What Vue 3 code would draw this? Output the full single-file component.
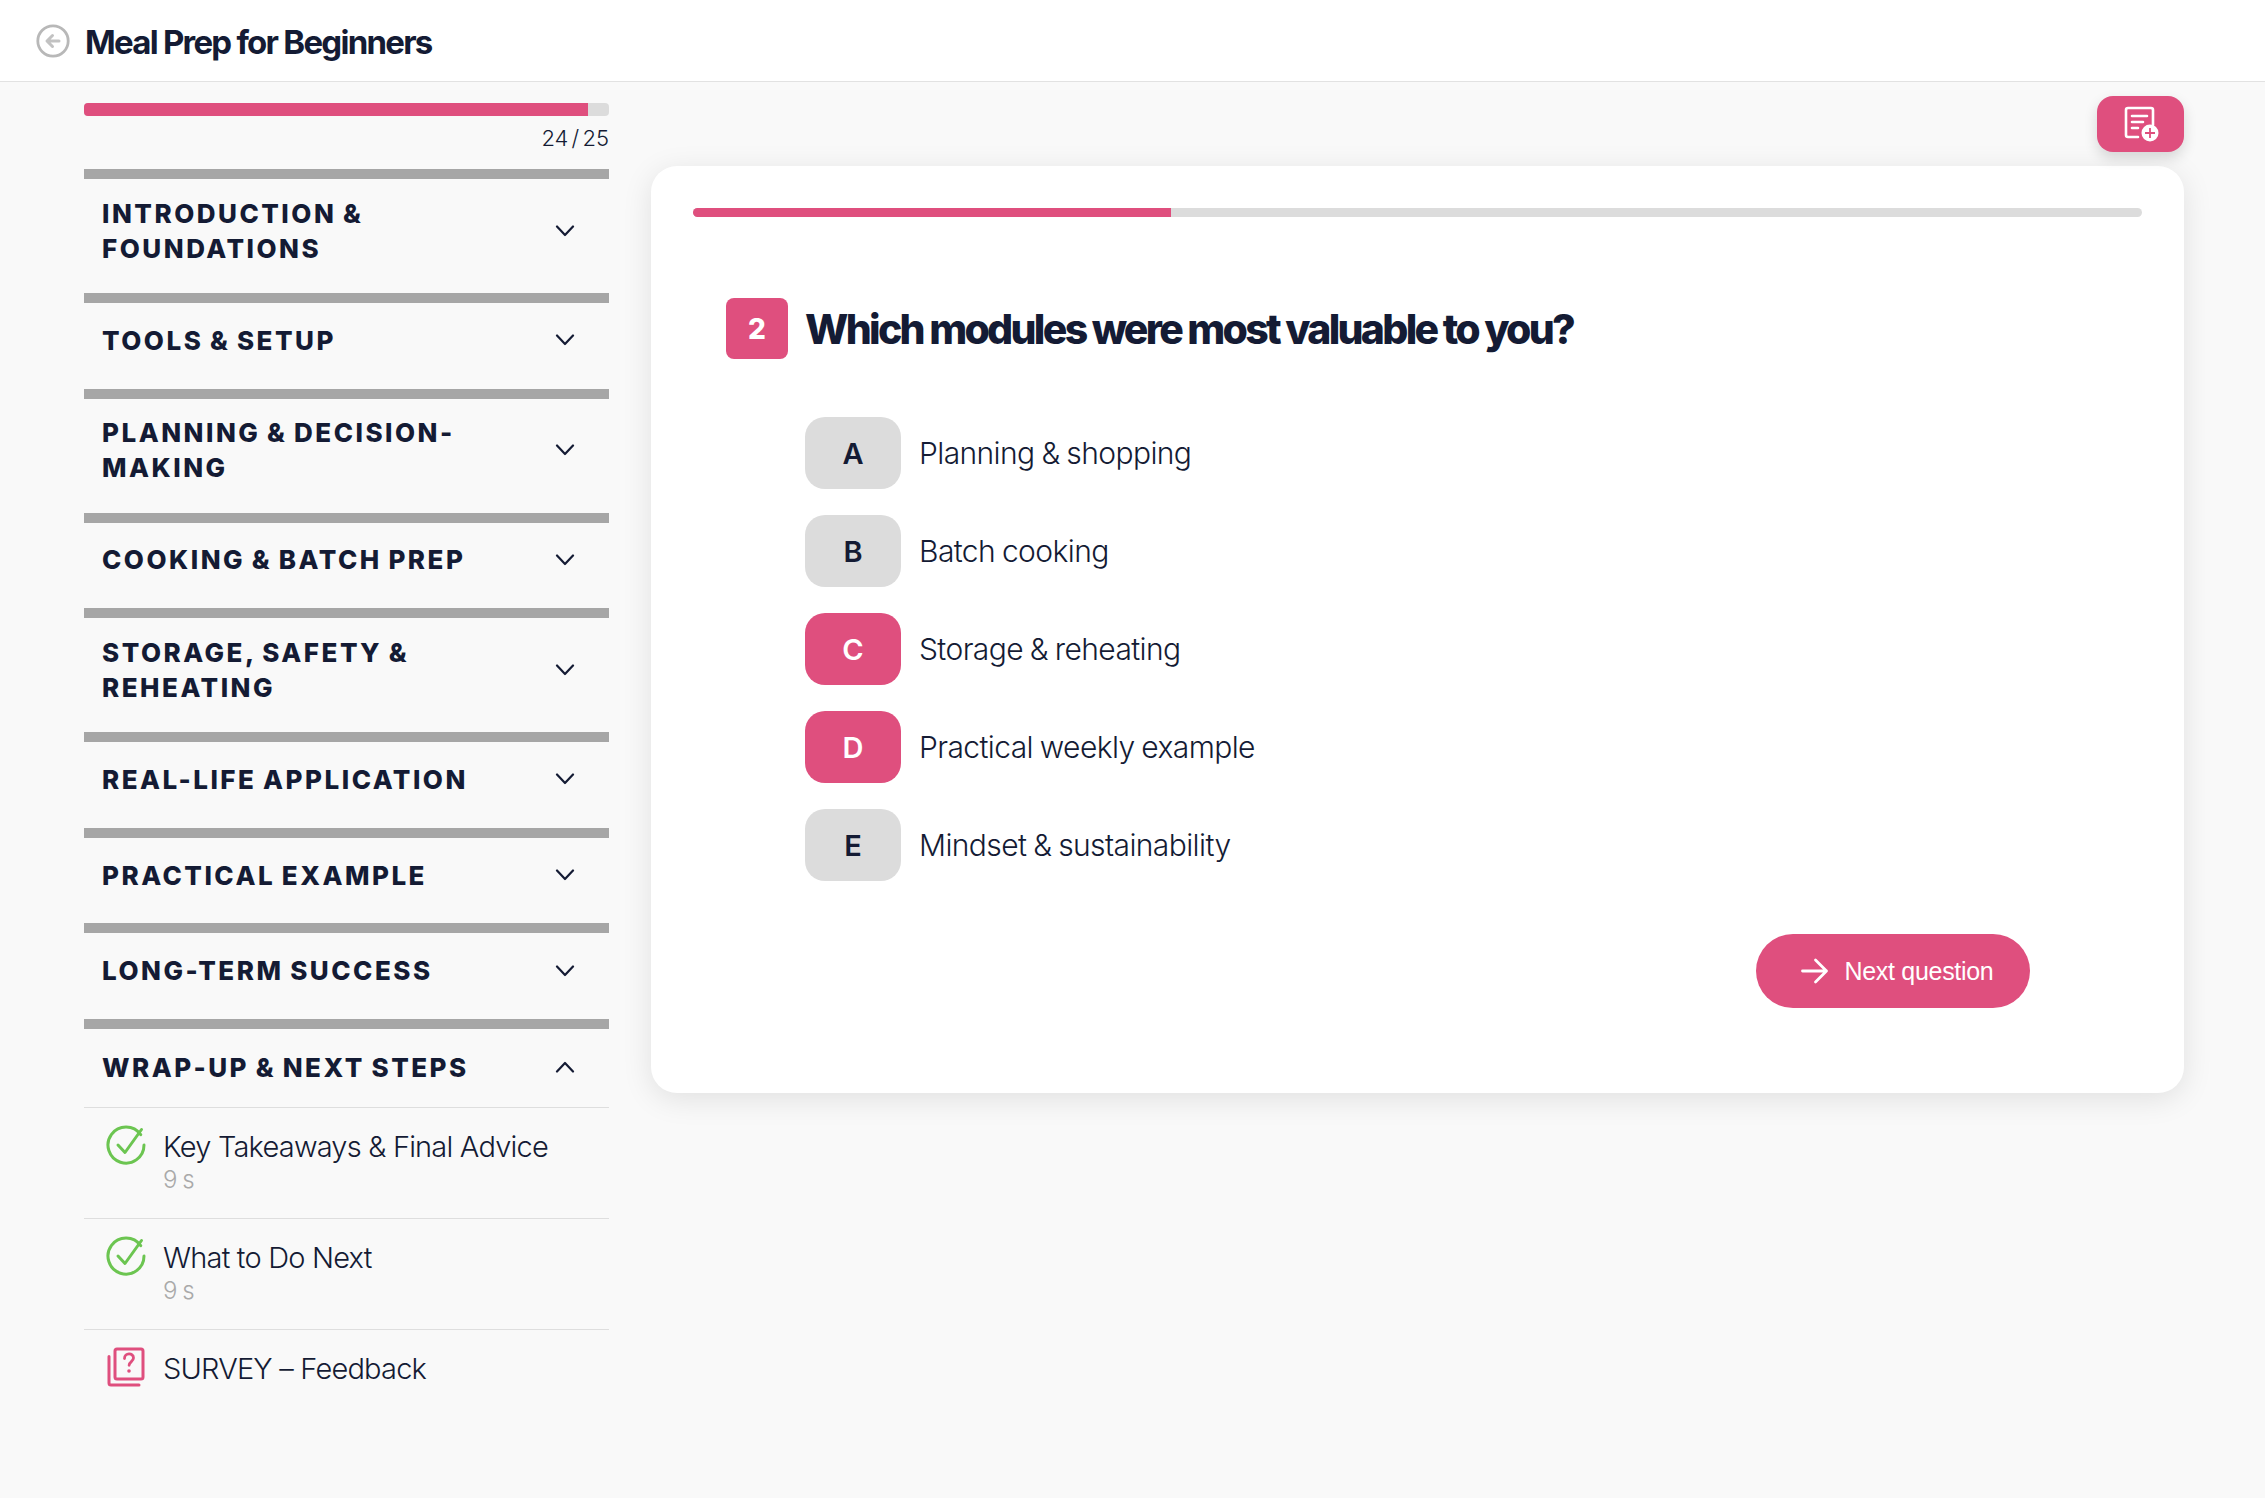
<template>
  <div class="page">
    <header class="topbar">
      <svg class="back" viewBox="0 0 34 34" fill="none">
        <circle cx="17" cy="17" r="15.2" stroke="#b8b8b8" stroke-width="2.8" />
        <path d="M23 17H11.5M16.5 11.5 11 17l5.5 5.5" stroke="#c2c2c2" stroke-width="3" stroke-linecap="round" stroke-linejoin="round" />
      </svg>
      <h1 class="course-title">Meal Prep for Beginners</h1>
    </header>

    <div class="layout">
      <aside class="sidebar">
        <div class="bar"><div class="bar-fill"></div></div>
        <div class="count">24 / 25</div>

        <section v-for="s in sections" :key="s.title" class="section">
          <div class="section-head" :class="{ open: s.open }">
            <span class="section-title">{{ s.title }}</span>
            <svg class="chevron" viewBox="0 0 20 12" fill="none">
              <path :d="s.open ? 'M2 10.5 10 2l8 8.5' : 'M2 1.5 10 10l8-8.5'" stroke="#141b34" stroke-width="2.2" stroke-linecap="round" stroke-linejoin="round" />
            </svg>
          </div>
          <template v-if="s.open">
            <div v-for="l in lessons" :key="l.name" class="lesson">
              <svg v-if="l.time" class="lesson-icon" viewBox="0 0 40 40" fill="none">
                <path d="M34.7 9.7A18 18 0 1 0 38 20" stroke="#6cc551" stroke-width="3" stroke-linecap="round" />
                <path d="M12 20l7 7.5L35.5 4.5" stroke="#6cc551" stroke-width="3" stroke-linecap="round" stroke-linejoin="round" />
              </svg>
              <svg v-else class="lesson-icon" viewBox="0 0 40 40" fill="none">
                <path d="M3 9.5V36a2 2 0 0 0 2 2h28" stroke="#df4f7e" stroke-width="3" stroke-linecap="round" />
                <rect x="9" y="2" width="28" height="30" rx="2" stroke="#df4f7e" stroke-width="3" />
                <path d="M18.5 11.5c0-6 9-6 9-.4 0 3.4-4.4 3.6-4.4 7.2" stroke="#df4f7e" stroke-width="2.8" stroke-linecap="round" />
                <circle cx="23" cy="24" r="1.8" fill="#df4f7e" />
              </svg>
              <div class="lesson-text">
                <div class="lesson-name">{{ l.name }}</div>
                <div v-if="l.time" class="lesson-time">{{ l.time }}</div>
              </div>
            </div>
          </template>
        </section>
      </aside>

      <main class="main">
        <div class="toolbar">
          <button class="notes-btn">
            <svg viewBox="0 0 36 36" width="36" height="36" fill="none">
              <path d="M15 31H5a2 2 0 0 1-2-2V4a2 2 0 0 1 2-2h23a2 2 0 0 1 2 2v15" stroke="#fff" stroke-width="2.6" stroke-linecap="round" />
              <path d="M9 10h15M9 16h11M9 22h6" stroke="#fff" stroke-width="2.6" stroke-linecap="round" />
              <circle cx="27" cy="27" r="8.5" fill="#fff" />
              <path d="M27 22v10M22 27h10" stroke="#df4f7e" stroke-width="1.8" />
            </svg>
          </button>
        </div>

        <div class="card">
          <div class="quiz-bar"><div class="quiz-fill"></div></div>

          <div class="question">
            <span class="q-num">2</span>
            <h2 class="q-text">Which modules were most valuable to you?</h2>
          </div>

          <div class="options">
            <div v-for="o in options" :key="o.key" class="option">
              <span class="opt-key" :class="{ picked: o.picked }">{{ o.key }}</span>
              <span class="opt-label">{{ o.label }}</span>
            </div>
          </div>

          <div class="actions">
            <button class="next-btn">
              <svg viewBox="0 0 28 26" width="28" height="26" fill="none">
                <path d="M1.5 13h24M14.5 2l11 11-11 11" stroke="#fff" stroke-width="2.8" stroke-linecap="round" stroke-linejoin="round" />
              </svg>
              Next question
            </button>
          </div>
        </div>
      </main>
    </div>
  </div>
</template>

<script setup>
const sections = [
  { title: "Introduction & Foundations" },
  { title: "Tools & Setup" },
  { title: "Planning & Decision-Making" },
  { title: "Cooking & Batch Prep" },
  { title: "Storage, Safety & Reheating" },
  { title: "Real-Life Application" },
  { title: "Practical Example" },
  { title: "Long-Term Success" },
  { title: "Wrap-Up & Next Steps", open: true },
];

const lessons = [
  { name: "Key Takeaways & Final Advice", time: "9 s" },
  { name: "What to Do Next", time: "9 s" },
  { name: "SURVEY – Feedback" },
];

const options = [
  { key: "A", label: "Planning & shopping" },
  { key: "B", label: "Batch cooking" },
  { key: "C", label: "Storage & reheating", picked: true },
  { key: "D", label: "Practical weekly example", picked: true },
  { key: "E", label: "Mindset & sustainability" },
];
</script>

<style>
html,
body {
  margin: 0;
  background: #f9f9f9;
}
</style>

<style scoped>
.page {
  min-height: 100vh;
  background: #f9f9f9;
  color: #141b34;
  font-family: Inter, "Liberation Sans", sans-serif;
}

.topbar {
  display: flex;
  align-items: center;
  gap: 15px;
  height: 81px;
  padding-left: 36px;
  background: #fff;
  border-bottom: 1px solid #e2e2e2;
}

.back {
  width: 34px;
  height: 34px;
}

.course-title {
  margin: 2px 0 0;
  font-size: 33px;
  font-weight: 700;
  letter-spacing: -1.75px;
}

.layout {
  display: flex;
  padding: 21px 81px 0 84px;
}

.sidebar {
  width: 525px;
  flex-shrink: 0;
}

.bar {
  height: 13px;
  border-radius: 4px;
  background: #dcdcdc;
  overflow: hidden;
}

.bar-fill {
  width: 96%;
  height: 100%;
  background: #df4f7e;
}

.count {
  margin-top: 8px;
  margin-bottom: 16px;
  height: 29px;
  line-height: 29px;
  text-align: right;
  font-size: 22px;
  font-weight: 300;
  word-spacing: -3px;
}

.section {
  border-top: 10px solid #a6a6a6;
}

.section-head {
  display: flex;
  align-items: center;
  justify-content: space-between;
  min-height: 85.6px;
  padding: 16.5px 34px 27.5px 18px;
  box-sizing: border-box;
}

.section-head.open {
  min-height: 78px;
  padding-top: 21px;
  padding-bottom: 22px;
}

.section-title {
  max-width: 420px;
  font-size: 26px;
  font-weight: 800;
  line-height: 35px;
  letter-spacing: 2.5px;
  word-spacing: -1.5px;
  text-transform: uppercase;
}

.chevron {
  width: 20px;
  height: 12px;
  flex-shrink: 0;
}

.lesson {
  display: flex;
  gap: 17px;
  min-height: 111px;
  padding: 17px 0 0 22px;
  box-sizing: border-box;
  border-top: 1px solid #dedede;
}

.lesson-icon {
  width: 40px;
  height: 40px;
  flex-shrink: 0;
}

.lesson-text {
  padding-top: 2px;
}

.lesson-name {
  font-size: 29px;
  font-weight: 300;
  line-height: 40px;
  letter-spacing: -0.8px;
}

.lesson-time {
  font-size: 24px;
  font-weight: 300;
  line-height: 26px;
  color: #a9a9a9;
  word-spacing: -2px;
}

.main {
  flex: 1;
  margin-left: 42px;
}

.toolbar {
  display: flex;
  justify-content: flex-end;
  margin-top: -7px;
  margin-bottom: 14px;
}

.notes-btn {
  display: flex;
  align-items: center;
  justify-content: center;
  width: 87px;
  height: 56px;
  border: none;
  border-radius: 16px;
  background: #df4f7e;
  box-shadow: 0 6px 14px rgba(0, 0, 0, 0.14);
}

.card {
  height: 927px;
  padding: 42px 42px 0;
  box-sizing: border-box;
  background: #fff;
  border-radius: 26px;
  box-shadow: 0 6px 30px rgba(0, 0, 0, 0.1);
}

.quiz-bar {
  height: 9px;
  border-radius: 5px;
  background: #dcdcdc;
  overflow: hidden;
}

.quiz-fill {
  width: 33%;
  height: 100%;
  background: #df4f7e;
}

.question {
  display: flex;
  align-items: center;
  gap: 17px;
  margin: 81px 0 0 33px;
}

.q-num {
  display: flex;
  align-items: center;
  justify-content: center;
  width: 62px;
  height: 61px;
  border-radius: 8px;
  background: #df4f7e;
  color: #fff;
  font-size: 28px;
  font-weight: 800;
}

.q-text {
  margin: 0;
  font-size: 41px;
  font-weight: 800;
  letter-spacing: -2.72px;
}

.options {
  display: flex;
  flex-direction: column;
  gap: 26px;
  margin: 58px 0 0 112px;
}

.option {
  display: flex;
  align-items: center;
  gap: 18px;
}

.opt-key {
  display: flex;
  align-items: center;
  justify-content: center;
  width: 96px;
  height: 72px;
  border-radius: 20px;
  background: #dcdcdc;
  font-size: 29px;
  font-weight: 600;
}

.opt-key.picked {
  background: #df4f7e;
  color: #fff;
}

.opt-label {
  font-size: 30px;
  font-weight: 300;
  letter-spacing: -0.6px;
  word-spacing: -1px;
}

.actions {
  display: flex;
  justify-content: flex-end;
  margin: 53px 112px 0 0;
}

.next-btn {
  display: flex;
  align-items: center;
  justify-content: center;
  gap: 16px;
  width: 274px;
  height: 74px;
  padding: 0 0 0 8px;
  border: none;
  border-radius: 37px;
  background: #df4f7e;
  color: #fff;
  font-family: "Liberation Sans", sans-serif;
  font-size: 25px;
  letter-spacing: -0.3px;
}
</style>
